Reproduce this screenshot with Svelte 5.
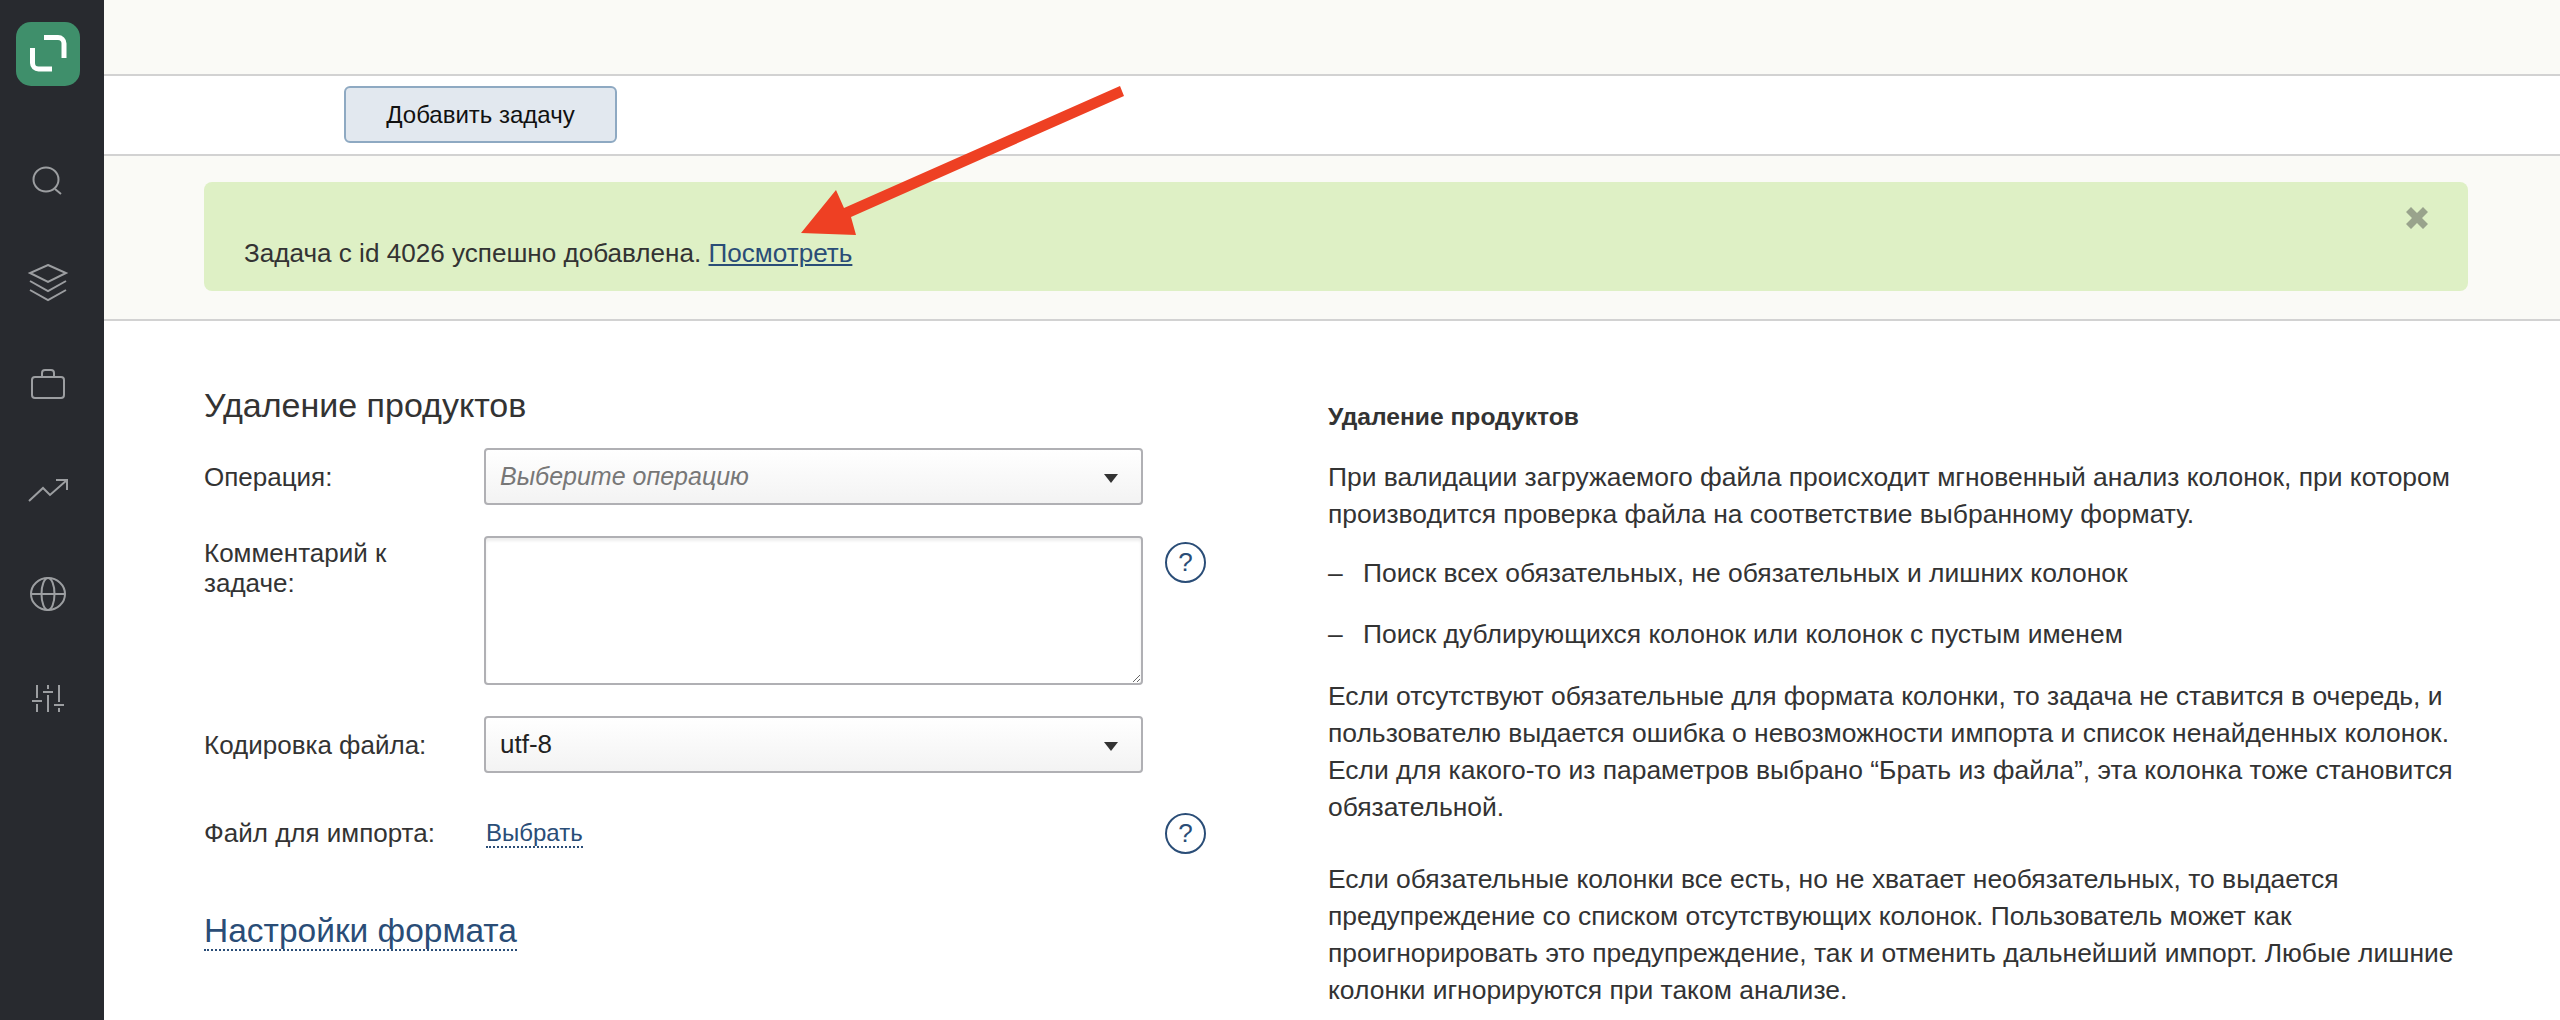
<script>
  const navIcons = ["search", "layers", "case", "trend", "globe", "sliders"];
</script>

<div class="page">
  <aside class="sidebar">
    <div class="logo">
      <svg width="38" height="40" viewBox="0 0 38 40" fill="none" stroke="#fff" stroke-width="5">
        <path d="M15 3.500H29a6 6 0 0 1 6 6V24" />
        <path d="M3.500 14V29a6 6 0 0 0 6 6H23" />
      </svg>
    </div>
    <nav class="nav">
      {#each navIcons as icon}
        <div class="nav-item">
          <svg width="44" height="44" viewBox="0 0 44 44" fill="none" stroke="#9c9ea1" stroke-width="2">
            {#if icon === "search"}
              <ellipse cx="20" cy="18.500" rx="12.500" ry="12" />
              <path d="M29 28l6 5" />
            {:else if icon === "layers"}
              <path d="M22 1L40 9 22 18 4 9z" />
              <path d="M4 17l18 10 18-10" />
              <path d="M4 26l18 10 18-10" />
            {:else if icon === "case"}
              <rect x="6" y="10" width="32" height="21" rx="3" />
              <path d="M16 10V6a3 3 0 0 1 3-3h6a3 3 0 0 1 3 3v4" />
            {:else if icon === "trend"}
              <path d="M3 31L17 18l7 7L41 10" />
              <path d="M30 10h11v10" />
            {:else if icon === "globe"}
              <ellipse cx="22" cy="21" rx="17" ry="16" />
              <ellipse cx="22" cy="21" rx="6.500" ry="16" />
              <path d="M5 21h34" />
            {:else}
              <path d="M11 9v13M11 28v8M22 9v4M22 19v17M33 9v17M33 32v4" />
              <path d="M6 25h10M17 16h10M28 29h10" />
            {/if}
          </svg>
        </div>
      {/each}
    </nav>
  </aside>

  <main class="content">
    <div class="topbar"></div>
    <div class="toolbar">
      <button class="add-btn">Добавить задачу</button>
    </div>
    <section class="notice">
      <div class="alert">
        <span>Задача с id 4026 успешно добавлена. <a class="link" href="#view">Посмотреть</a></span>
        <svg class="close" width="22" height="22" viewBox="0 0 22 22" fill="#99a38c">
          <path d="M5 0l6 6 6-6 5 5-6 6 6 6-5 5-6-6-6 6-5-5 6-6-6-6z" />
        </svg>
      </div>
    </section>

    <div class="columns">
      <section class="form">
        <h2>Удаление продуктов</h2>
        <div class="grid">
          <div class="label center">Операция:</div>
          <div class="select placeholder">Выберите операцию<i class="caret"></i></div>
          <div></div>

          <div class="label comment">Комментарий к задаче:</div>
          <textarea></textarea>
          <div class="help-cell"><span class="help">?</span></div>

          <div class="label center">Кодировка файла:</div>
          <div class="select">utf-8<i class="caret"></i></div>
          <div></div>

          <div class="label center">Файл для импорта:</div>
          <div class="file"><span class="dashed">Выбрать</span></div>
          <div class="help-cell file-help"><span class="help">?</span></div>
        </div>
        <div class="format"><span class="dashed">Настройки формата</span></div>
      </section>

      <section class="doc">
        <h3>Удаление продуктов</h3>
        <p class="intro">При валидации загружаемого файла происходит мгновенный анализ колонок, при котором<br />
          производится проверка файла на соответствие выбранному формату.</p>
        <p class="item"><span class="dash">–</span>Поиск всех обязательных, не обязательных и лишних колонок</p>
        <p class="item-last"><span class="dash">–</span>Поиск дублирующихся колонок или колонок с пустым именем</p>
        <p class="para">Если отсутствуют обязательные для формата колонки, то задача не ставится в очередь, и<br />
          пользователю выдается ошибка о невозможности импорта и список ненайденных колонок.<br />
          Если для какого-то из параметров выбрано “Брать из файла”, эта колонка тоже становится<br />
          обязательной.</p>
        <p>Если обязательные колонки все есть, но не хватает необязательных, то выдается<br />
          предупреждение со списком отсутствующих колонок. Пользователь может как<br />
          проигнорировать это предупреждение, так и отменить дальнейший импорт. Любые лишние<br />
          колонки игнорируются при таком анализе.</p>
      </section>
    </div>
  </main>

  <!-- annotation drawn over the screenshot -->
  <svg class="arrow" width="340" height="160" viewBox="790 80 340 160" fill="#ee4023">
    <polygon points="1120,86 1124,96 851,217 856,235 801,233 836,190 844,208" />
  </svg>
</div>

<style>
  :global(body) {
    margin: 0;
    background: #fff;
  }

  .page {
    position: relative;
    display: flex;
    height: 1020px;
    overflow: hidden;
    font-family: "Liberation Sans", Arial, sans-serif;
    font-size: 26px;
    color: #333;
  }

  .arrow {
    position: absolute;
    left: 790px;
    top: 80px;
  }

  .sidebar {
    flex: 0 0 104px;
    background: #282a2f;
    display: flex;
    flex-direction: column;
    align-items: center;
    padding: 22px 8px 0 0;
    box-sizing: border-box;
  }

  .logo {
    width: 64px;
    height: 64px;
    border-radius: 15px;
    background: #3f8f6b;
    display: flex;
    align-items: center;
    justify-content: center;
  }

  .nav {
    margin-top: 75px;
    display: flex;
    flex-direction: column;
    gap: 59px;
  }

  .nav-item {
    width: 44px;
    height: 44px;
  }

  .content {
    flex: 1;
    min-width: 0;
  }

  .topbar {
    height: 74px;
    background: #fafaf6;
    border-bottom: 2px solid #d2d2d2;
  }

  .toolbar {
    height: 80px;
    padding: 10px 0 0 240px;
    box-sizing: border-box;
    border-bottom: 2px solid #d2d2d2;
  }

  .add-btn {
    width: 273px;
    height: 57px;
    background: #e2e8ef;
    border: 2px solid #8ea9c2;
    border-radius: 6px;
    font: inherit;
    font-size: 24px;
    color: #111;
    padding: 0;
  }

  .notice {
    background: #fafaf6;
    border-bottom: 2px solid #d2d2d2;
    padding: 26px 92px 28px 100px;
  }

  .alert {
    position: relative;
    height: 109px;
    box-sizing: border-box;
    padding: 53px 0 0 40px;
    line-height: 36px;
    font-size: 26.100px;
    background: #def0c5;
    border-radius: 8px;
  }

  .close {
    position: absolute;
    top: 25px;
    right: 40px;
  }

  .link {
    color: #2a4d77;
    text-decoration: underline;
  }

  .columns {
    display: flex;
  }

  .form {
    flex: 0 0 1126px;
    padding: 60px 0 0 100px;
    box-sizing: border-box;
  }

  h2 {
    margin: 0;
    font-size: 34px;
    font-weight: 400;
    line-height: 48px;
    color: #333;
  }

  .grid {
    margin-top: 19px;
    display: grid;
    grid-template-columns: 280px 659px 62px;
    grid-template-rows: 57px 149px 57px 58px;
    row-gap: 31px;
  }

  .label {
    line-height: 30px;
  }

  .center {
    align-self: center;
  }

  .comment {
    padding-top: 2px;
    padding-right: 40px;
  }

  .select {
    position: relative;
    box-sizing: border-box;
    height: 57px;
    padding-left: 14px;
    line-height: 53px;
    border: 2px solid #b0b0b4;
    border-radius: 4px;
    background: linear-gradient(#fff, #f3f3f3);
    color: #222;
  }

  .placeholder {
    font-style: italic;
    font-size: 25px;
    color: #777;
  }

  .caret {
    position: absolute;
    right: 23px;
    top: 24px;
    border-left: 7px solid transparent;
    border-right: 7px solid transparent;
    border-top: 9px solid #333;
  }

  textarea {
    box-sizing: border-box;
    width: 659px;
    height: 149px;
    margin: 0;
    border: 2px solid #b0b0b4;
    border-radius: 4px;
    background: #fff;
    box-shadow: inset 0 3px 3px #eee;
    outline: none;
  }

  .help-cell {
    padding: 6px 0 0 22px;
  }

  .file-help {
    padding-top: 9px;
  }

  .help {
    display: block;
    box-sizing: border-box;
    width: 41px;
    height: 41px;
    border: 2px solid #2a4d77;
    border-radius: 50%;
    text-align: center;
    line-height: 37px;
    font-size: 26px;
    color: #2a4d77;
  }

  .file {
    align-self: center;
    padding-left: 2px;
    font-size: 24px;
  }

  .dashed {
    color: #2a4d77;
    border-bottom: 2px dotted #2a4d77;
  }

  .format {
    margin-top: 47px;
    font-size: 33.500px;
    line-height: 44px;
  }

  .doc {
    padding-top: 78px;
    padding-left: 98px;
    white-space: nowrap;
    font-size: 26.450px;
  }

  h3 {
    margin: 0 0 24px;
    font-size: 24.600px;
    line-height: 36px;
    font-weight: 700;
  }

  p {
    margin: 0;
    line-height: 37px;
  }

  .intro {
    margin-bottom: 22px;
  }

  .item {
    margin-bottom: 24px;
  }

  .item-last {
    margin-bottom: 25px;
  }

  .para {
    margin-bottom: 35px;
  }

  .dash {
    display: inline-block;
    width: 35px;
  }
</style>
